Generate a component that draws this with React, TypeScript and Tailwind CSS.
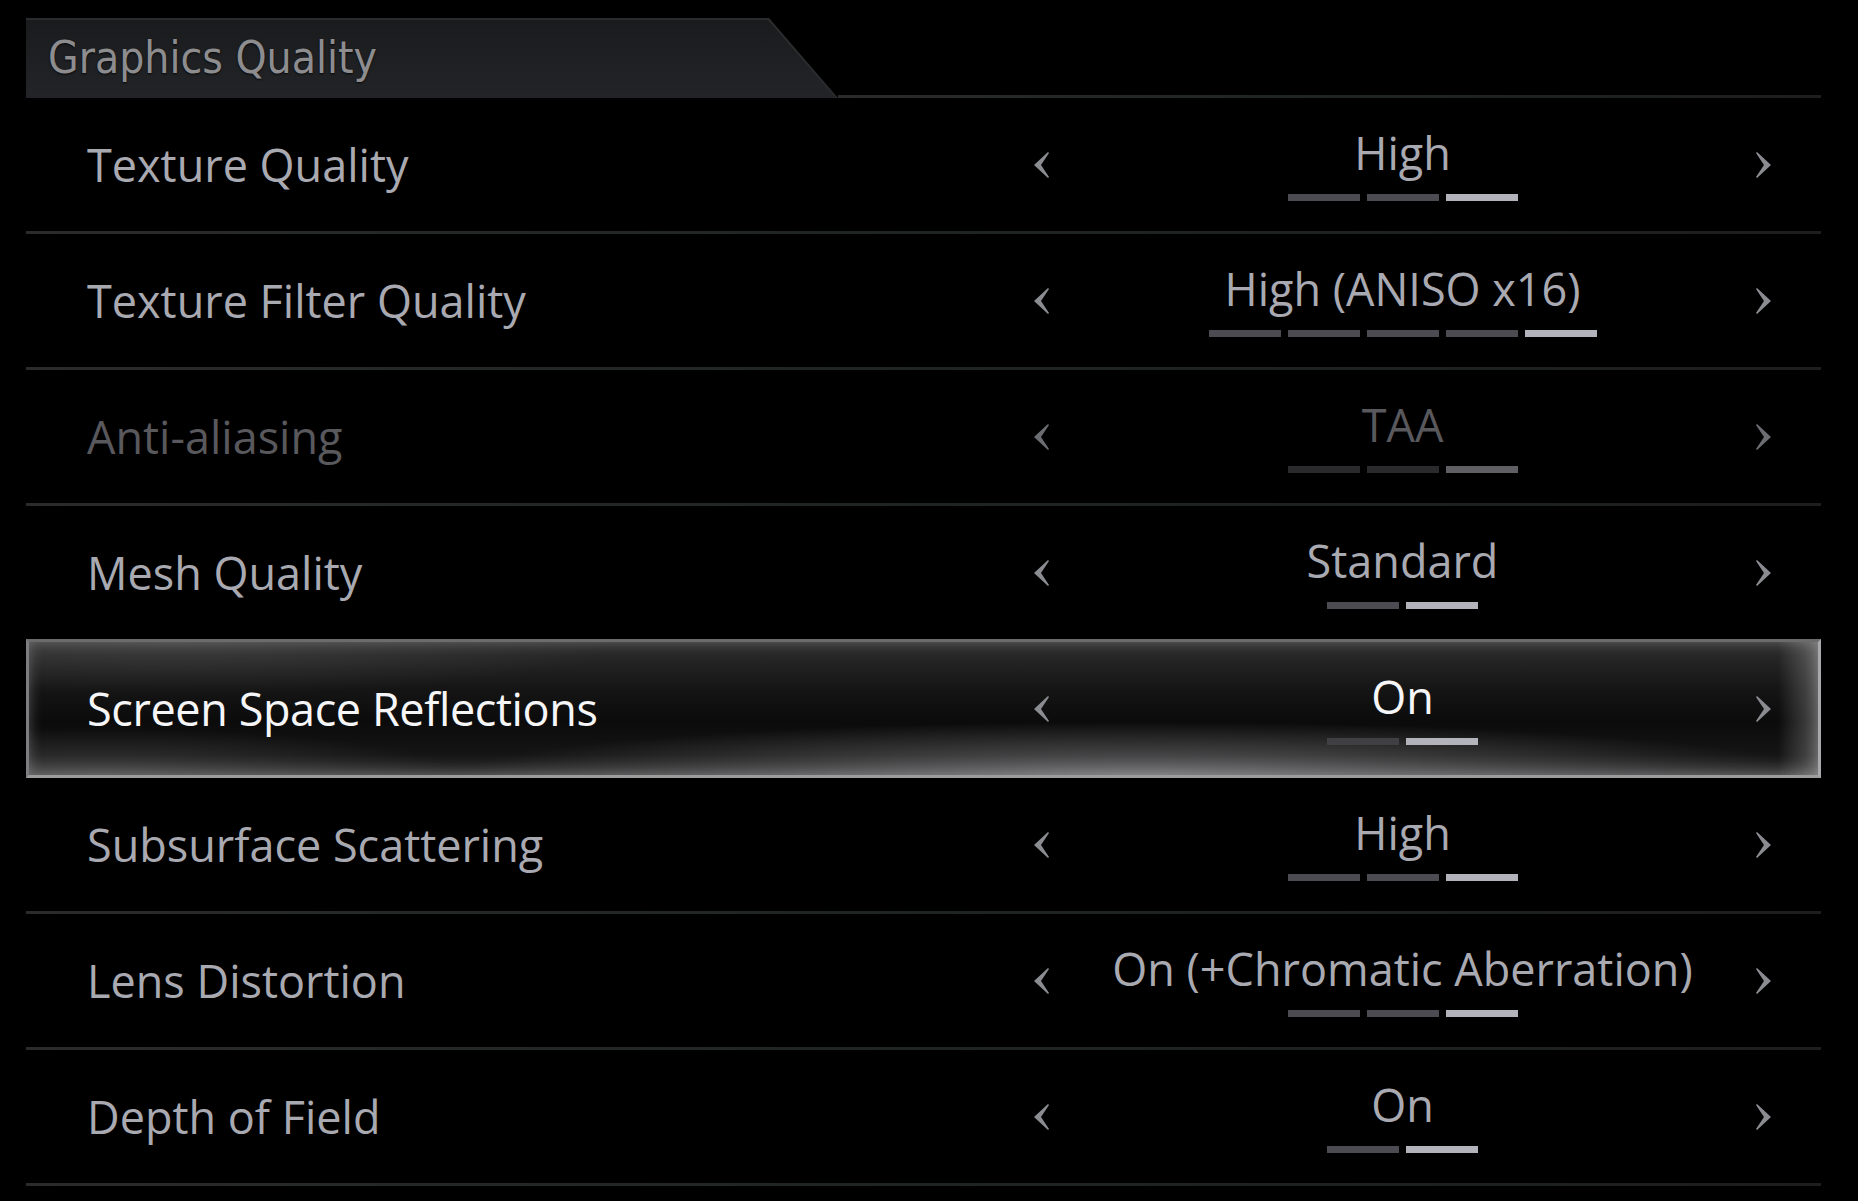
import React from "react";

type Setting = {
  label: string;
  value: string;
  steps: number;
  active: number;
  disabled?: boolean;
  selected?: boolean;
};

const settings: Setting[] = [
  { label: "Texture Quality", value: "High", steps: 3, active: 2 },
  { label: "Texture Filter Quality", value: "High (ANISO x16)", steps: 5, active: 4 },
  { label: "Anti-aliasing", value: "TAA", steps: 3, active: 2, disabled: true },
  { label: "Mesh Quality", value: "Standard", steps: 2, active: 1 },
  { label: "Screen Space Reflections", value: "On", steps: 2, active: 1, selected: true },
  { label: "Subsurface Scattering", value: "High", steps: 3, active: 2 },
  { label: "Lens Distortion", value: "On (+Chromatic Aberration)", steps: 3, active: 2 },
  { label: "Depth of Field", value: "On", steps: 2, active: 1 },
];

const Chevron = ({ dir, color }: { dir: "left" | "right"; color: string }) => (
  <svg width="16" height="26" viewBox="0 0 16 26" className="shrink-0">
    <polygon
      points={dir === "left" ? "0,13 14,0 15,1 7,13 15,25 14,26" : "16,13 2,0 1,1 9,13 1,25 2,26"}
      fill={color}
    />
  </svg>
);

const Divider = () => (
  <div className="h-[3px] w-full bg-gradient-to-r from-[#2a2b2c] via-[#1f2524] to-[#1d1e1f]" />
);

const Row = ({ s }: { s: Setting }) => {
  const labelColor = s.selected ? "text-[#f6f6f8]" : s.disabled ? "text-[#58585d]" : "text-[#a9a9b1]";
  const chevronColor = s.disabled ? "#6c6d72" : "#8b8c91";
  const barOn = s.disabled ? "bg-[#5f5f64]" : "bg-[#b3b3bb]";
  const barOff = s.disabled ? "bg-[#2a2a2c]" : s.selected ? "bg-[#3f3f44]" : "bg-[#4b4b51]";
  const pad = s.selected ? "pl-[58px] pr-[47px]" : "pl-[61px] pr-[50px]";

  return (
    <div className={`relative z-10 flex h-full items-center ${pad}`}>
      <div className={`flex-1 text-[45px] leading-[45px] ${labelColor} ${s.selected ? "tracking-[-0.4px]" : ""}`}>
        {s.label}
      </div>
      <div className="flex w-[737px] items-center">
        <Chevron dir="left" color={chevronColor} />
        <div className="flex flex-1 flex-col items-center pt-[2px]">
          <div className={`whitespace-nowrap text-[45px] leading-[45px] ${labelColor}`}>{s.value}</div>
          <div className="mt-[19px] flex gap-[7px]">
            {Array.from({ length: s.steps }).map((_, i) => (
              <div key={i} className={`h-[7px] w-[72px] ${i === s.active ? barOn : barOff}`} />
            ))}
          </div>
        </div>
        <Chevron dir="right" color={chevronColor} />
      </div>
    </div>
  );
};

export default function App() {
  return (
    <div className="h-[1201px] w-full overflow-hidden bg-black font-['Open_Sans',sans-serif]">
      <div className="ml-[26px] w-[1795px] pt-[18px]">
        {/* header tab */}
        <div className="flex items-end">
          <div className="h-[80px] w-[812px] bg-[#2b2c2e] [clip-path:polygon(0_0,743px_0,812px_100%,0_100%)]">
            <div className="flex h-full items-center bg-gradient-to-b from-[#1a1b1d] to-[#232427] pl-[22px] [clip-path:polygon(0_2px,742px_2px,810px_100%,0_100%)]">
              <span className="font-['Liberation_Sans_Narrow','DejaVu_Sans_Condensed',sans-serif] text-[44px] leading-none text-[#8d8d90] [text-shadow:0_1px_2px_rgba(0,0,0,0.8)]">
                Graphics Quality
              </span>
            </div>
          </div>
          <div className="h-[3px] flex-1 bg-gradient-to-r from-[#2a2b2c] via-[#1f2524] to-[#1d1e1f]" />
        </div>

        {settings.map((s, i) => {
          const nextSelected = settings[i + 1]?.selected;
          if (s.selected) {
            return (
              <div
                key={s.label}
                className="relative h-[139px] border-[3px] border-t-[#6c6c6e] border-r-[#a9a9ab] border-b-[#9c9c9e] border-l-[#7d7d80] bg-[linear-gradient(to_bottom,#2e2e2f_0%,#151515_35%,#0b0b0b_60%,#151515_85%,#333334_100%)] shadow-[inset_0_0_14px_rgba(255,255,255,0.28)]"
              >
                <div className="absolute inset-0 bg-[radial-gradient(ellipse_38%_40%_at_62%_100%,rgba(200,200,205,0.42),transparent)]" />
                <div className="absolute inset-0 bg-[radial-gradient(ellipse_20%_35%_at_4%_100%,rgba(150,150,150,0.28),transparent)]" />
                <div className="absolute inset-0 bg-[radial-gradient(ellipse_25%_40%_at_8%_0%,rgba(120,120,120,0.25),transparent)]" />
                <div className="absolute inset-y-0 right-0 w-[40px] bg-gradient-to-l from-[rgba(200,200,200,0.35)] to-transparent" />
                <Row s={s} />
              </div>
            );
          }
          return (
            <div key={s.label}>
              <div className="h-[133px]">
                <Row s={s} />
              </div>
              {!nextSelected && <Divider />}
            </div>
          );
        })}
      </div>
    </div>
  );
}
